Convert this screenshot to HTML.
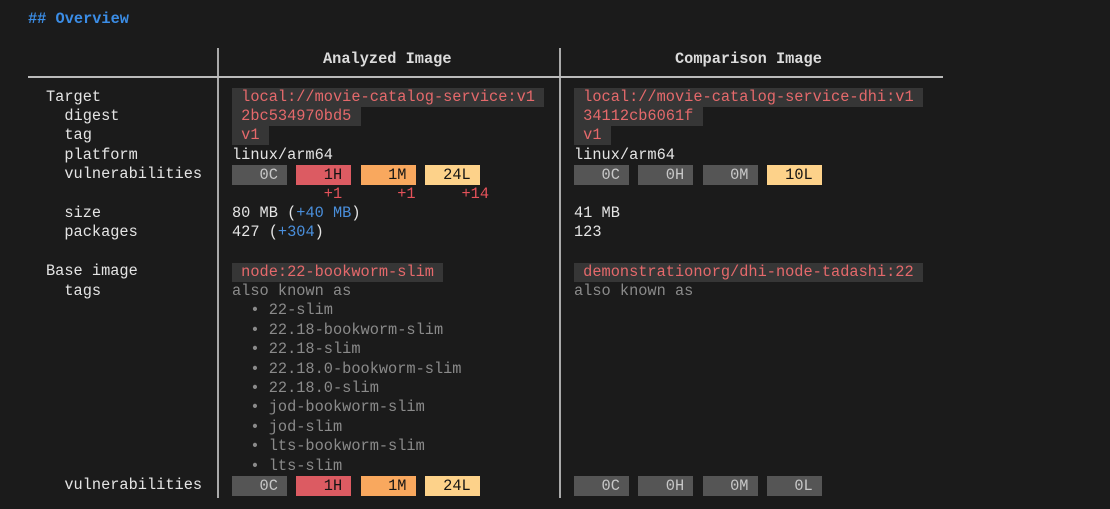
<!DOCTYPE html>
<html><head><meta charset="utf-8"><style>
body{margin:0;width:1110px;height:507px;background:#1b1b1b;overflow:hidden;font-family:"Liberation Mono",monospace;font-size:15.3px;color:#e4e4e4}
.l{position:absolute;white-space:pre;line-height:19.4px;height:19.4px}
.b{display:inline-block;height:19px;line-height:19px;background:#363636;color:#e5696b}
.g{color:#8a8a8a}
.r{color:#e5525a}
.bl{color:#4a8fdc}
.v{display:inline-block;height:20px;line-height:20px;color:#141414}
.c0{background:#555;color:#c8c8c8}
.ch{background:#dc5b62}
.cm{background:#f9a85e}
.cl{background:#fdd28a}
.hd{position:absolute;top:48px;font-weight:bold;color:#dcdcdc}
#w{position:absolute;left:0;top:1.5px;width:1110px;height:507px}
</style></head><body>
<div id="w">
<div class="l" style="left:28px;top:8px;color:#3b8de6;font-weight:bold">## Overview</div>
<div class="hd" style="left:323px">Analyzed Image</div>
<div class="hd" style="left:675px">Comparison Image</div>
<div style="position:absolute;left:217px;top:46px;width:1.5px;height:450px;background:#aaa"></div>
<div style="position:absolute;left:559px;top:46px;width:1.5px;height:450px;background:#aaa"></div>
<div style="position:absolute;left:28px;top:74.5px;width:915px;height:1.5px;background:#bbb"></div>

<div id="lab" class="l" style="left:46px;top:86px;height:auto">Target
  digest
  tag
  platform
  vulnerabilities

  size
  packages

Base image
  tags









  vulnerabilities</div>

<div class="l" style="left:232px;top:86px"><span class="b"> local://movie-catalog-service:v1 </span></div>
<div class="l" style="left:232px;top:105.4px"><span class="b"> 2bc534970bd5 </span></div>
<div class="l" style="left:232px;top:124.8px"><span class="b"> v1 </span></div>
<div class="l" style="left:232px;top:144.2px">linux/arm64</div>
<div class="l" style="left:232px;top:163.6px"><span class="v c0">   0C </span> <span class="v ch">   1H </span> <span class="v cm">   1M </span> <span class="v cl">  24L </span></div>
<div class="l r" style="left:232px;top:183px">          +1      +1     +14</div>
<div class="l" style="left:232px;top:202.4px">80 MB (<span class="bl">+40 MB</span>)</div>
<div class="l" style="left:232px;top:221.8px">427 (<span class="bl">+304</span>)</div>
<div class="l" style="left:232px;top:261px"><span class="b"> node:22-bookworm-slim </span></div>
<div class="l g" style="left:232px;top:280.4px;height:auto">also known as
  • 22-slim
  • 22.18-bookworm-slim
  • 22.18-slim
  • 22.18.0-bookworm-slim
  • 22.18.0-slim
  • jod-bookworm-slim
  • jod-slim
  • lts-bookworm-slim
  • lts-slim</div>
<div class="l" style="left:232px;top:474.3px"><span class="v c0">   0C </span> <span class="v ch">   1H </span> <span class="v cm">   1M </span> <span class="v cl">  24L </span></div>

<div class="l" style="left:574px;top:86px"><span class="b"> local://movie-catalog-service-dhi:v1 </span></div>
<div class="l" style="left:574px;top:105.4px"><span class="b"> 34112cb6061f </span></div>
<div class="l" style="left:574px;top:124.8px"><span class="b"> v1 </span></div>
<div class="l" style="left:574px;top:144.2px">linux/arm64</div>
<div class="l" style="left:574px;top:163.6px"><span class="v c0">   0C </span> <span class="v c0">   0H </span> <span class="v c0">   0M </span> <span class="v cl">  10L </span></div>
<div class="l" style="left:574px;top:202.4px">41 MB</div>
<div class="l" style="left:574px;top:221.8px">123</div>
<div class="l" style="left:574px;top:261px"><span class="b"> demonstrationorg/dhi-node-tadashi:22 </span></div>
<div class="l g" style="left:574px;top:280.4px">also known as</div>
<div class="l" style="left:574px;top:474.3px"><span class="v c0">   0C </span> <span class="v c0">   0H </span> <span class="v c0">   0M </span> <span class="v c0">   0L </span></div>
</div>
</body></html>
